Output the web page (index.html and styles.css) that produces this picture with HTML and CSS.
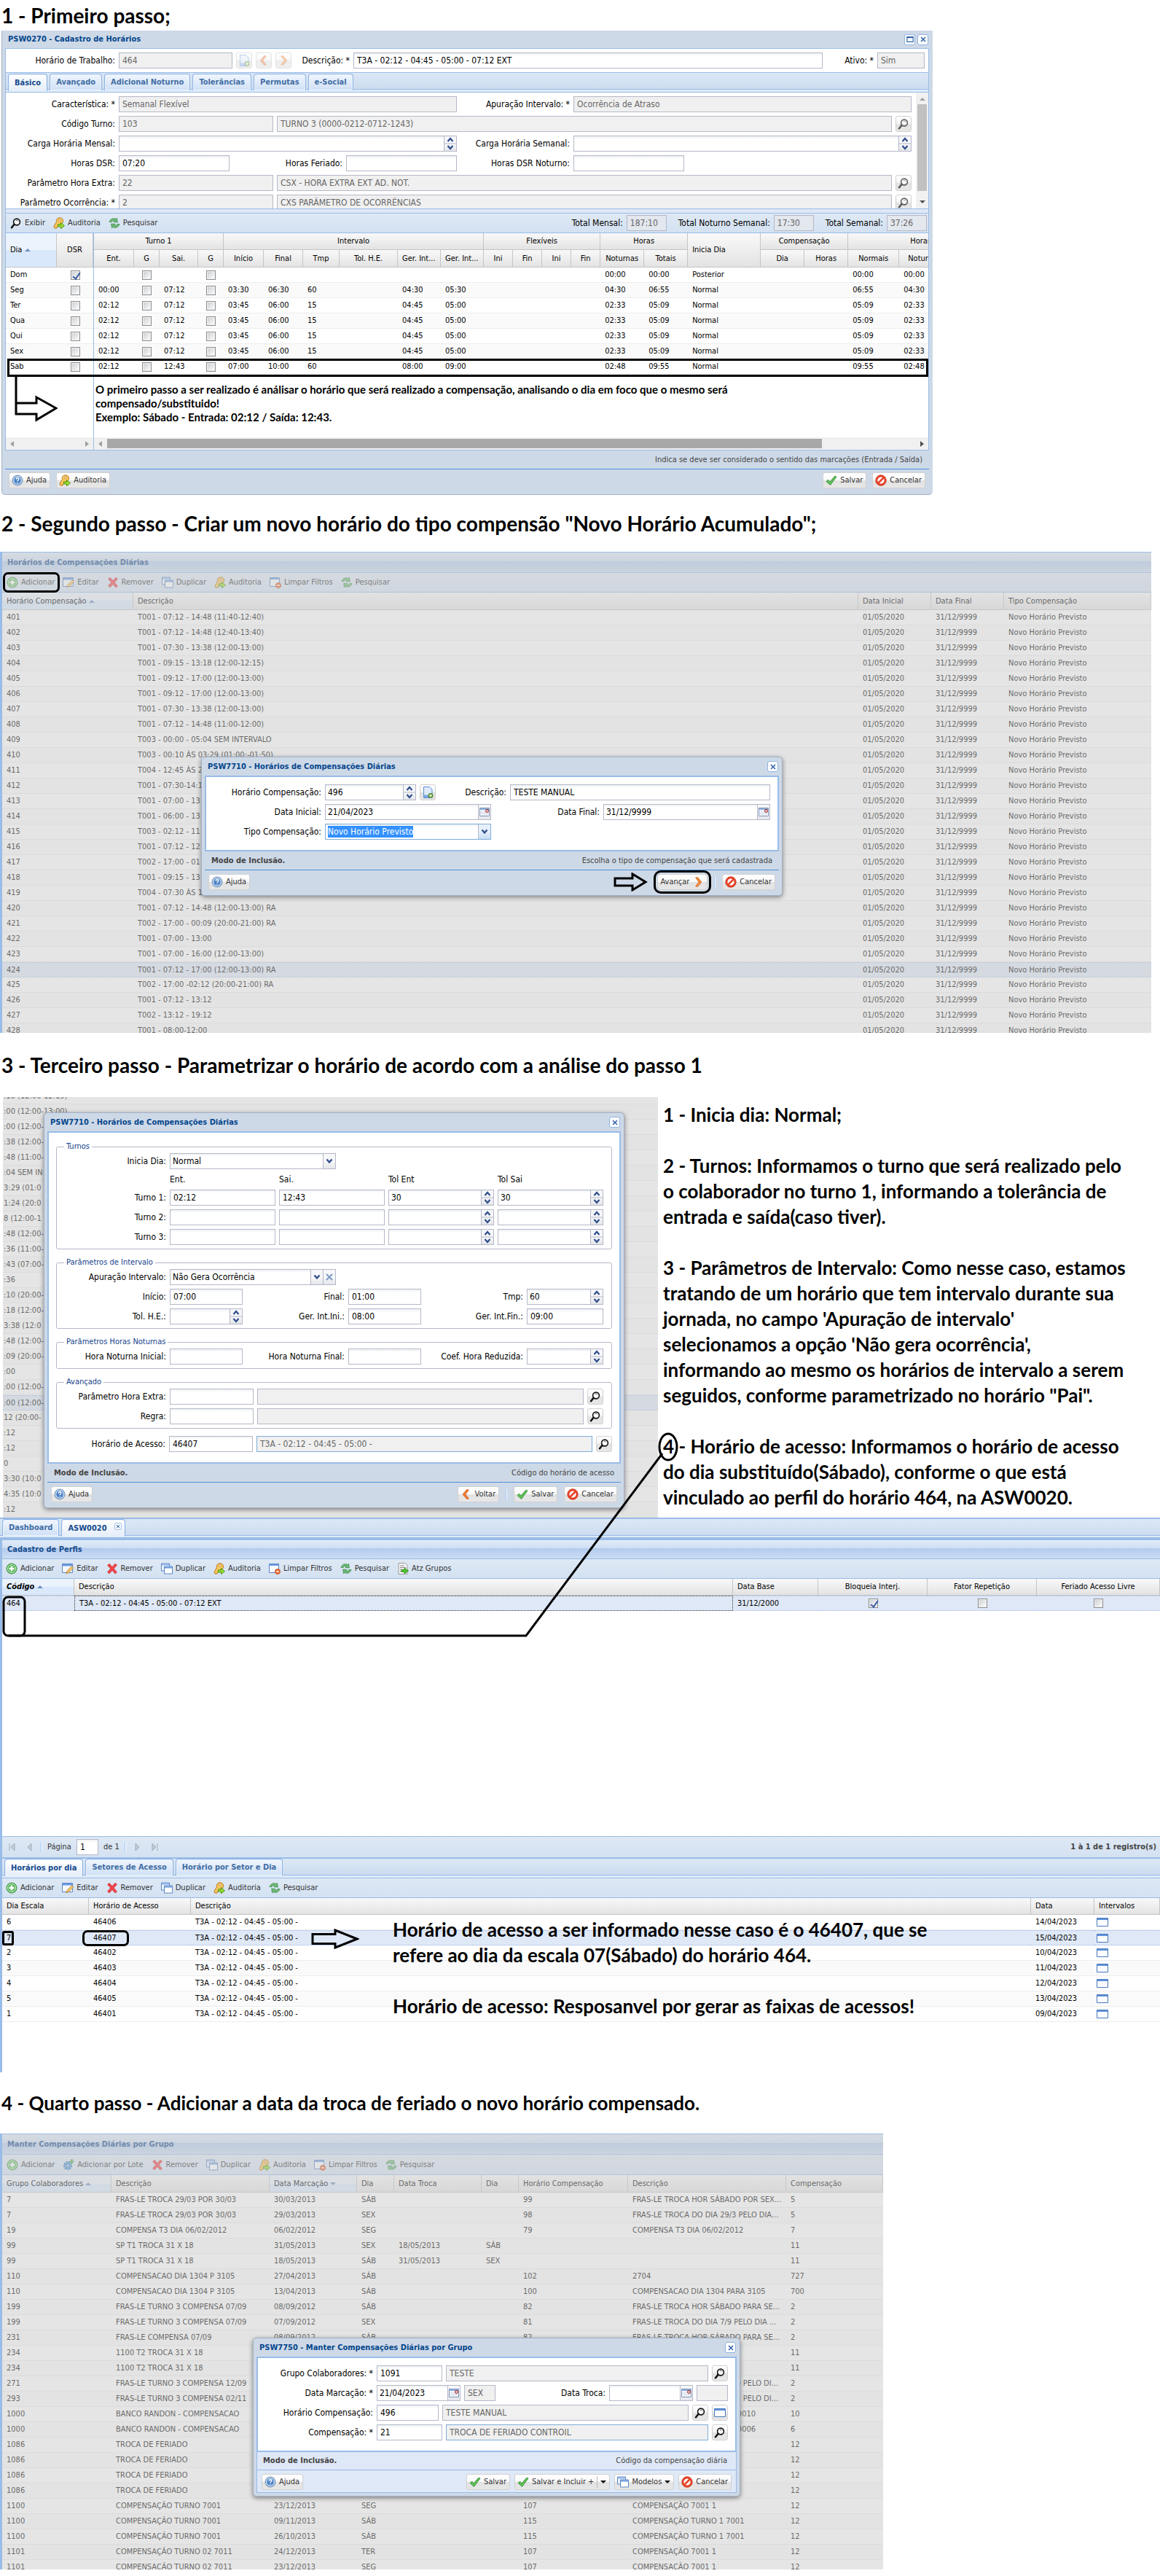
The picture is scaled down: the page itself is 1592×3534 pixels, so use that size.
FILE: index.html
```html
<!DOCTYPE html>
<html lang="pt-BR">
<head>
<meta charset="utf-8">
<meta name="viewport" content="width=device-width, initial-scale=1">
<title>Troca de feriado - passo a passo</title>
<link rel="stylesheet" href="styles.css">
</head>
<body>
<svg class="sprite" aria-hidden="true">
  <symbol id="lens" viewBox="0 0 16 16"><circle cx="9" cy="6.5" r="4.4" fill="#fff" fill-opacity=".7" stroke="#111" stroke-width="1.6"/><path d="M8 4.5q2-1 3 1" fill="none" stroke="#555"/><path d="M5.6 9.8 2 14.2" stroke="#111" stroke-width="2.6" stroke-linecap="round"/></symbol>
  <symbol id="key" viewBox="0 0 16 16"><path d="M8.500 .8a4.200 4.200 0 0 0-4 5.600L1 12.500 2 15h3l2-4 3-1.500a4.300 4.300 0 0 0-1.500-8.700z" fill="#f6c65b" stroke="#b9781f"/><circle cx="9" cy="4" r="1.400" fill="#fff" stroke="#b9781f" stroke-width=".7"/><path d="M6.500 10h4V7.500l5 4.200-5 4V13h-4z" fill="#9be02c" stroke="#3d8a12" stroke-width=".9"/></symbol>
  <symbol id="refresh" viewBox="0 0 16 16"><path d="M1 6.500C2 2.500 6.500.500 10 2.500l1.500-1.200.8 5.700-5.500-.5 1.500-1.400C6.500 4 4.700 4.800 4.200 6.500z" fill="#6dbb74" stroke="#3f8a4a" stroke-width=".8"/><path d="M15 9.500c-1 4-5.500 6-9 4l-1.500 1.200L3.700 9l5.500.5-1.500 1.400c1.800 1.100 3.600.3 4.100-1.400z" fill="#6dbb74" stroke="#3f8a4a" stroke-width=".8"/></symbol>
  <symbol id="check" viewBox="0 0 16 16"><path d="M1 9.500 3.500 7l2.300 3L13 2l2 1.200L6.500 14.500z" fill="#5fbf55" stroke="#2f8a36" stroke-width=".8"/></symbol>
  <symbol id="cancel" viewBox="0 0 16 16"><circle cx="8" cy="8" r="6" fill="#fff" stroke="#e8442a" stroke-width="2.800"/><path d="m4 12 8-8" stroke="#e8442a" stroke-width="2.500"/><circle cx="8" cy="8" r="7.300" fill="none" stroke="#b8311c" stroke-width=".5"/></symbol>
  <symbol id="help" viewBox="0 0 16 16"><circle cx="8" cy="8" r="7" fill="#9dbde0" stroke="#7593bb"/><circle cx="8" cy="8" r="5.200" fill="#4b83c6" stroke="#e9f1fa" stroke-width=".8"/><path d="M6.200 6.600q.2-1.800 1.900-1.800 1.700.1 1.700 1.500 0 .9-1 1.500-.7.500-.7 1.200M8 10.300v1.300" fill="none" stroke="#fff" stroke-width="1.400"/></symbol>
  <symbol id="add" viewBox="0 0 16 16"><circle cx="8" cy="8" r="7" fill="#5cb85c" stroke="#3f9142"/><circle cx="8" cy="8" r="5.600" fill="none" stroke="#c9eac9"/><path d="M8 4.500v7M4.500 8h7" stroke="#fff" stroke-width="2.400"/></symbol>
  <symbol id="edit" viewBox="0 0 16 16"><path d="M.5 1.500h14v12H.5z" fill="#f5f8fd" stroke="#5d86c5"/><path d="M1 2h13v2.500H1z" fill="#6b9be0"/><path d="m6 14.800 1-3.500 6.500-6.500 2.200 2.200-6.500 6.600z" fill="#f7c96b" stroke="#b0752a" stroke-width=".8"/></symbol>
  <symbol id="remove" viewBox="0 0 16 16"><path d="M1.500 3.500 4 1.200 8 5.500l4-4.300 2.500 2L10.300 8l4.200 5-2.500 2L8 10.500 4 15l-2.500-2.300L5.700 8z" fill="#f0454a" stroke="#c4272e" stroke-width=".6"/></symbol>
  <symbol id="copy" viewBox="0 0 16 16"><path d="M.5 1h11v10H.5z" fill="#eef4fc" stroke="#5d86c5"/><path d="M1 1.500h10v2H1z" fill="#8fb4ea"/><path d="M4.500 5h11v10h-11z" fill="#fff" stroke="#5d86c5"/><path d="M5 5.500h10v2H5z" fill="#6b9be0"/></symbol>
  <symbol id="clear" viewBox="0 0 16 16"><path d="M.5 1.500h13v12H.5z" fill="#f7fafe" stroke="#5d86c5"/><path d="M1 2h12v2H1z" fill="#6b9be0"/><circle cx="12" cy="12" r="3.600" fill="#ea6a35" stroke="#b9481b" stroke-width=".7"/><path d="M10 12h4" stroke="#fff" stroke-width="1.300"/></symbol>
  <symbol id="groups" viewBox="0 0 16 16"><path d="M2 .5h9l3 3v12H2z" fill="#f4f4f4" stroke="#9a9a9a"/><path d="M4 4h6M4 6.500h8M4 9h3M4 11.500h2" stroke="#8a8a8a"/><path d="M6 9.500h4V7l5.500 4-5.500 4v-2.500H6z" fill="#4cc62c" stroke="#2c8415" stroke-width=".8"/></symbol>
  <symbol id="gear" viewBox="0 0 16 16"><circle cx="7" cy="9" r="5" fill="#62a8dc" stroke="#2f77b8" stroke-width="2.200" stroke-dasharray="2 1.400"/><circle cx="7" cy="9" r="2" fill="#d7e9f7" stroke="#2f77b8"/><path d="M12.500 0v7M9.500 3.500h6" stroke="#4da64d" stroke-width="2.200"/></symbol>
  <symbol id="doc" viewBox="0 0 16 16"><path d="M2.500.5h8l3.500 3.500v11.500H2.500z" fill="#dfeafc" stroke="#5b8dd6"/><path d="M3 11.500h8v3.500H3z" fill="#7ea9e6"/><circle cx="12" cy="12.500" r="3.200" fill="#6aa53d" stroke="#3f7420" stroke-width=".6"/><path d="M12 10.800v3.400M10.300 12.500h3.400" stroke="#fff" stroke-width="1.200"/></symbol>
  <symbol id="next" viewBox="0 0 16 16"><path d="m4.500 2 3-.5L13 8l-5.500 6.500-3-.5L9 8z" fill="#f08a3c" stroke="#c9641c" stroke-width=".6"/></symbol>
  <symbol id="prev" viewBox="0 0 16 16"><path d="m11.500 2-3-.5L3 8l5.500 6.500 3-.5L7 8z" fill="#ef7a35" stroke="#c9541c" stroke-width=".6"/></symbol>
  <symbol id="win" viewBox="0 0 16 16"><path d="M.5 2.500h15v11H.5z" fill="#fafcff" stroke="#4a78bd"/><path d="M1 3h14v2H1z" fill="#5f93dc"/></symbol>
  <symbol id="cal" viewBox="0 0 16 16"><path d="M1.500 2.500h13v11h-13z" fill="#fff" stroke="#7f95b8"/><path d="M2 3h12v2H2z" fill="#8fb0dd"/><path d="M2 8h12M2 10.500h12M5 5v8M8 5v8M11 5v8" stroke="#d5dcea"/><circle cx="11.500" cy="6.500" r="1.800" fill="#fff" stroke="#a2282c" stroke-width="1.200"/></symbol>
  <symbol id="ud" viewBox="0 0 16 20"><path d="m4.500 7 3.500-4 3.500 4M4.500 13l3.500 4 3.500-4" fill="none" stroke="#2f4e8c" stroke-width="2.200"/><path d="M0 10h16" stroke="#b5b8c8"/></symbol>
  <symbol id="down" viewBox="0 0 16 20"><path d="m4.500 7.500 3.500 4 3.500-4" fill="none" stroke="#2f4e8c" stroke-width="2.400"/></symbol>
  <symbol id="x" viewBox="0 0 16 16"><path d="m4 4 8 8m0-8-8 8" stroke="#2f5fa8" stroke-width="2"/></symbol>
  <symbol id="max" viewBox="0 0 16 16"><path d="M2.500 3.500h11v9h-11z" fill="none" stroke="#2f5fa8" stroke-width="1.500"/><path d="M2 4.500h12" stroke="#2f5fa8" stroke-width="2"/></symbol>
</svg>

<main>
<section class="step step--1">
  <h2 class="step-title">1 - Primeiro passo;</h2>
  <div class="win win--main">
    <header class="win-title"><h3>PSW0270 - Cadastro de Horários</h3><button class="tool" aria-label="Maximizar"><svg><use href="#max"/></svg></button><button class="tool" aria-label="Fechar"><svg><use href="#x"/></svg></button></header>
    <div class="frame">
      <div class="row row--head">
        <label class="lbl w150" for="ht">Horário de Trabalho:</label><input id="ht" class="w156" value="464" disabled>
        <button class="sq" disabled aria-label="Novo"><svg><use href="#doc"/></svg></button><button class="sq" disabled aria-label="Anterior"><svg><use href="#prev"/></svg></button><button class="sq" disabled aria-label="Próximo"><svg><use href="#next"/></svg></button>
        <label class="lbl w75" for="ds">Descrição: *</label><input id="ds" class="grow" value="T3A - 02:12 - 04:45 - 05:00 - 07:12 EXT">
        <label class="lbl w65" for="at">Ativo: *</label><input id="at" class="w65" value="Sim" disabled>
      </div>
      <nav class="tabs"><button class="tab on">Básico</button><button class="tab">Avançado</button><button class="tab">Adicional Noturno</button><button class="tab">Tolerâncias</button><button class="tab">Permutas</button><button class="tab">e-Social</button></nav>
      <div class="scroll-form">
        <div class="rows">
          <div class="halves">
            <div class="row"><label class="lbl w150" for="ca">Característica: *</label><input id="ca" class="grow" value="Semanal Flexível" disabled></div>
            <div class="row"><label class="lbl w150" for="ai">Apuração Intervalo: *</label><input id="ai" class="grow" value="Ocorrência de Atraso" disabled></div>
          </div>
          <div class="row"><label class="lbl w150" for="ct">Código Turno:</label><input id="ct" class="w212" value="103" disabled><input class="grow" aria-label="Descrição do turno" value="TURNO 3 (0000-0212-0712-1243)" disabled><button class="sq" disabled aria-label="Buscar turno"><svg><use href="#lens"/></svg></button></div>
          <div class="halves">
            <div class="row"><label class="lbl w150" for="cm">Carga Horária Mensal:</label><span class="combo grow"><input id="cm"><button aria-label="Ajustar"><svg><use href="#ud"/></svg></button></span></div>
            <div class="row"><label class="lbl w150" for="cs">Carga Horária Semanal:</label><span class="combo grow"><input id="cs"><button aria-label="Ajustar"><svg><use href="#ud"/></svg></button></span></div>
          </div>
          <div class="row"><label class="lbl w150" for="hd">Horas DSR:</label><input id="hd" class="w152" value="07:20"><label class="lbl w150" for="hf">Horas Feriado:</label><input id="hf" class="w152"><label class="lbl w150" for="hn">Horas DSR Noturno:</label><input id="hn" class="w152"></div>
          <div class="row"><label class="lbl w150" for="ph">Parâmetro Hora Extra:</label><input id="ph" class="w212" value="22" disabled><input class="grow" aria-label="Descrição hora extra" value="CSX - HORA EXTRA EXT AD. NOT." disabled><button class="sq" disabled aria-label="Buscar hora extra"><svg><use href="#lens"/></svg></button></div>
          <div class="row"><label class="lbl w150" for="po">Parâmetro Ocorrência: *</label><input id="po" class="w212" value="2" disabled><input class="grow" aria-label="Descrição ocorrência" value="CXS PARÂMETRO DE OCORRÊNCIAS" disabled><button class="sq" disabled aria-label="Buscar ocorrência"><svg><use href="#lens"/></svg></button></div>
        </div>
        <div class="vbar"><i class="tri up"></i><span></span><i class="tri dn"></i></div>
      </div>
      <div class="splitter"></div>
      <div class="toolbar">
        <button class="tb"><svg><use href="#lens"/></svg>Exibir</button><button class="tb"><svg><use href="#key"/></svg>Auditoria</button><button class="tb"><svg><use href="#refresh"/></svg>Pesquisar</button>
        <span class="totals"><label for="t1">Total Mensal:</label><input id="t1" value="187:10" disabled><label for="t2">Total Noturno Semanal:</label><input id="t2" value="17:30" disabled><label for="t3">Total Semanal:</label><input id="t3" value="37:26" disabled></span>
      </div>
      <div class="split">
        <div class="locked">
          <table class="grid">
            <colgroup><col class="c70"><col class="c50"></colgroup>
            <thead><tr class="tall"><th class="sorted">Dia <i class="tri up"></i></th><th class="c">DSR</th></tr></thead>
            <tbody>
            <tr><td>Dom<td><input type="checkbox" aria-label="DSR" checked>
            <tr><td>Seg<td><input type="checkbox" aria-label="DSR">
            <tr><td>Ter<td><input type="checkbox" aria-label="DSR">
            <tr><td>Qua<td><input type="checkbox" aria-label="DSR">
            <tr><td>Qui<td><input type="checkbox" aria-label="DSR">
            <tr><td>Sex<td><input type="checkbox" aria-label="DSR">
            <tr><td>Sab<td><input type="checkbox" aria-label="DSR">
            </tbody>
          </table>
          <div class="hbar"><i class="tri lf"></i><b></b><i class="tri rt"></i></div>
        </div>
        <div class="free">
          <table class="grid grid--days">
            <colgroup><col class="c55"><col class="c35"><col class="c53"><col class="c35"><col class="c55"><col class="c54"><col class="c50"><col class="c80"><col class="c59"><col class="c59"><col class="c40"><col class="c40"><col class="c40"><col class="c40"><col class="c60"><col class="c60"><col class="c100"><col class="c60"><col class="c60"><col class="c70"><col class="c70"><col class="c60"></colgroup>
            <thead>
            <tr><th class="c" colspan="4">Turno 1</th><th class="c" colspan="6">Intervalo</th><th class="c" colspan="4">Flexíveis</th><th class="c" colspan="2">Horas</th><th rowspan="2">Inicia Dia</th><th class="c" colspan="2">Compensação</th><th class="c" colspan="3">Horas</th></tr>
            <tr><th class="c">Ent.</th><th class="c">G</th><th class="c">Sai.</th><th class="c">G</th><th class="c">Início</th><th class="c">Final</th><th class="c">Tmp</th><th class="c">Tol. H.E.</th><th>Ger. Int...</th><th>Ger. Int...</th><th class="c">Ini</th><th class="c">Fin</th><th class="c">Ini</th><th class="c">Fin</th><th class="c">Noturnas</th><th class="c">Totais</th><th class="c">Dia</th><th class="c">Horas</th><th class="c">Normais</th><th class="c">Noturnas</th><th></th></tr>
            </thead>
            <tbody>
            <tr><td><td><input type="checkbox" aria-label="G"><td><td><input type="checkbox" aria-label="G"><td><td><td><td><td><td><td><td><td><td><td>00:00<td>00:00<td>Posterior<td><td><td>00:00<td>00:00<td>
            <tr><td>00:00<td><input type="checkbox" aria-label="G"><td>07:12<td><input type="checkbox" aria-label="G"><td>03:30<td>06:30<td>60<td><td>04:30<td>05:30<td><td><td><td><td>04:30<td>06:55<td>Normal<td><td><td>06:55<td>04:30<td>
            <tr><td>02:12<td><input type="checkbox" aria-label="G"><td>07:12<td><input type="checkbox" aria-label="G"><td>03:45<td>06:00<td>15<td><td>04:45<td>05:00<td><td><td><td><td>02:33<td>05:09<td>Normal<td><td><td>05:09<td>02:33<td>
            <tr><td>02:12<td><input type="checkbox" aria-label="G"><td>07:12<td><input type="checkbox" aria-label="G"><td>03:45<td>06:00<td>15<td><td>04:45<td>05:00<td><td><td><td><td>02:33<td>05:09<td>Normal<td><td><td>05:09<td>02:33<td>
            <tr><td>02:12<td><input type="checkbox" aria-label="G"><td>07:12<td><input type="checkbox" aria-label="G"><td>03:45<td>06:00<td>15<td><td>04:45<td>05:00<td><td><td><td><td>02:33<td>05:09<td>Normal<td><td><td>05:09<td>02:33<td>
            <tr><td>02:12<td><input type="checkbox" aria-label="G"><td>07:12<td><input type="checkbox" aria-label="G"><td>03:45<td>06:00<td>15<td><td>04:45<td>05:00<td><td><td><td><td>02:33<td>05:09<td>Normal<td><td><td>05:09<td>02:33<td>
            <tr><td>02:12<td><input type="checkbox" aria-label="G"><td>12:43<td><input type="checkbox" aria-label="G"><td>07:00<td>10:00<td>60<td><td>08:00<td>09:00<td><td><td><td><td>02:48<td>09:55<td>Normal<td><td><td>09:55<td>02:48<td>
            </tbody>
          </table>
          <p class="note">O primeiro passo a ser realizado é análisar o horário que será realizado a compensação, analisando o dia em foco que o mesmo será<br>compensado/substituido!<br>Exemplo: Sábado - Entrada: 02:12 / Saída: 12:43.</p>
          <div class="hbar"><i class="tri lf"></i><span></span><i class="tri rt dark"></i></div>
        </div>
        <div class="mark mark--sab"></div>
        <svg class="elbow" viewBox="0 0 62 66"><path d="M5 0v52h28v8l27-16-27-15v8H5" fill="none" stroke="#000" stroke-width="3"/></svg>
      </div>
    </div>
    <div class="status"><span></span><span>Indica se deve ser considerado o sentido das marcações (Entrada / Saída)</span></div>
    <footer class="foot"><button class="btn"><svg><use href="#help"/></svg>Ajuda</button><button class="btn"><svg><use href="#key"/></svg>Auditoria</button><i class="fill"></i><button class="btn"><svg><use href="#check"/></svg>Salvar</button><button class="btn"><svg><use href="#cancel"/></svg>Cancelar</button></footer>
  </div>
</section>

<section class="step step--2">
  <h2 class="step-title">2 - Segundo passo - Criar um novo horário do tipo compensão "Novo Horário Acumulado";</h2>
  <div class="stage stage--2">
    <div class="panel masked">
      <h3 class="panel-title">Horários de Compensações Diárias</h3>
      <div class="toolbar"><button class="tb"><svg><use href="#add"/></svg>Adicionar</button><button class="tb"><svg><use href="#edit"/></svg>Editar</button><button class="tb"><svg><use href="#remove"/></svg>Remover</button><button class="tb"><svg><use href="#copy"/></svg>Duplicar</button><button class="tb"><svg><use href="#key"/></svg>Auditoria</button><button class="tb"><svg><use href="#clear"/></svg>Limpar Filtros</button><button class="tb"><svg><use href="#refresh"/></svg>Pesquisar</button></div>
      <table class="grid grid--cut">
        <colgroup><col class="c180"><col><col class="c100"><col class="c100"><col class="c202"></colgroup>
        <thead><tr><th class="sorted">Horário Compensação <i class="tri up"></i></th><th>Descrição</th><th>Data Inicial</th><th>Data Final</th><th>Tipo Compensação</th></tr></thead>
        <tbody>
        <tr><td>401<td>T001 - 07:12 - 14:48 (11:40-12:40)<td>01/05/2020<td>31/12/9999<td>Novo Horário Previsto
        <tr><td>402<td>T001 - 07:12 - 14:48 (12:40-13:40)<td>01/05/2020<td>31/12/9999<td>Novo Horário Previsto
        <tr><td>403<td>T001 - 07:30 - 13:38 (12:00-13:00)<td>01/05/2020<td>31/12/9999<td>Novo Horário Previsto
        <tr><td>404<td>T001 - 09:15 - 13:18 (12:00-12:15)<td>01/05/2020<td>31/12/9999<td>Novo Horário Previsto
        <tr><td>405<td>T001 - 09:12 - 17:00 (12:00-13:00)<td>01/05/2020<td>31/12/9999<td>Novo Horário Previsto
        <tr><td>406<td>T001 - 09:12 - 17:00 (12:00-13:00)<td>01/05/2020<td>31/12/9999<td>Novo Horário Previsto
        <tr><td>407<td>T001 - 07:30 - 13:38 (12:00-13:00)<td>01/05/2020<td>31/12/9999<td>Novo Horário Previsto
        <tr><td>408<td>T001 - 07:12 - 14:48 (11:00-12:00)<td>01/05/2020<td>31/12/9999<td>Novo Horário Previsto
        <tr><td>409<td>T003 - 00:00 - 05:04 SEM INTERVALO<td>01/05/2020<td>31/12/9999<td>Novo Horário Previsto
        <tr><td>410<td>T003 - 00:10 ÀS 03:29 (01:00:-01:50)<td>01/05/2020<td>31/12/9999<td>Novo Horário Previsto
        <tr><td>411<td>T004 - 12:45 ÀS 2<td>01/05/2020<td>31/12/9999<td>Novo Horário Previsto
        <tr><td>412<td>T001 - 07:30-14:1<td>01/05/2020<td>31/12/9999<td>Novo Horário Previsto
        <tr><td>413<td>T001 - 07:00 - 13<td>01/05/2020<td>31/12/9999<td>Novo Horário Previsto
        <tr><td>414<td>T001 - 06:00 - 13<td>01/05/2020<td>31/12/9999<td>Novo Horário Previsto
        <tr><td>415<td>T003 - 02:12 - 11<td>01/05/2020<td>31/12/9999<td>Novo Horário Previsto
        <tr><td>416<td>T001 - 07:12 - 12<td>01/05/2020<td>31/12/9999<td>Novo Horário Previsto
        <tr><td>417<td>T002 - 17:00 - 01<td>01/05/2020<td>31/12/9999<td>Novo Horário Previsto
        <tr><td>418<td>T001 - 09:15 - 13<td>01/05/2020<td>31/12/9999<td>Novo Horário Previsto
        <tr><td>419<td>T004 - 07:30 ÀS 13:38 (12:00-13:00)<td>01/05/2020<td>31/12/9999<td>Novo Horário Previsto
        <tr><td>420<td>T001 - 07:12 - 14:48 (12:00-13:00) RA<td>01/05/2020<td>31/12/9999<td>Novo Horário Previsto
        <tr><td>421<td>T002 - 17:00 - 00:09 (20:00-21:00) RA<td>01/05/2020<td>31/12/9999<td>Novo Horário Previsto
        <tr><td>422<td>T001 - 07:00 - 13:00<td>01/05/2020<td>31/12/9999<td>Novo Horário Previsto
        <tr><td>423<td>T001 - 07:00 - 16:00 (12:00-13:00)<td>01/05/2020<td>31/12/9999<td>Novo Horário Previsto
        <tr class="sel"><td>424<td>T001 - 07:12 - 17:00 (12:00-13:00) RA<td>01/05/2020<td>31/12/9999<td>Novo Horário Previsto
        <tr><td>425<td>T002 - 17:00 -02:12 (20:00-21:00) RA<td>01/05/2020<td>31/12/9999<td>Novo Horário Previsto
        <tr><td>426<td>T001 - 07:12 - 13:12<td>01/05/2020<td>31/12/9999<td>Novo Horário Previsto
        <tr><td>427<td>T002 - 13:12 - 19:12<td>01/05/2020<td>31/12/9999<td>Novo Horário Previsto
        <tr><td>428<td>T001 - 08:00-12:00<td>01/05/2020<td>31/12/9999<td>Novo Horário Previsto
        </tbody>
      </table>
    </div>
    <div class="mark mark--add"></div>
    <div class="win dialog dialog--2" role="dialog" aria-label="Horários de Compensações Diárias">
      <header class="win-title"><h3>PSW7710 - Horários de Compensações Diárias</h3><button class="tool" aria-label="Fechar"><svg><use href="#x"/></svg></button></header>
      <div class="body rows">
        <div class="row"><label class="lbl w154" for="a1">Horário Compensação:</label><span class="combo w125"><input id="a1" value="496"><button aria-label="Ajustar"><svg><use href="#ud"/></svg></button></span><button class="sq" aria-label="Novo"><svg><use href="#doc"/></svg></button><label class="lbl w92" for="a2">Descrição:</label><input id="a2" class="grow" value="TESTE MANUAL"></div>
        <div class="row"><label class="lbl w154" for="a3">Data Inicial:</label><span class="combo w228"><input id="a3" value="21/04/2023"><button aria-label="Calendário"><svg><use href="#cal"/></svg></button></span><label class="lbl w144" for="a4">Data Final:</label><span class="combo grow"><input id="a4" value="31/12/9999"><button aria-label="Calendário"><svg><use href="#cal"/></svg></button></span></div>
        <div class="row"><label class="lbl w154" for="a5">Tipo Compensação:</label><span class="combo w228 focus"><span class="picked">Novo Horário Previsto</span><select id="a5"><option></option></select><button aria-label="Abrir lista"><svg><use href="#down"/></svg></button></span></div>
      </div>
      <div class="status"><b>Modo de Inclusão.</b><span>Escolha o tipo de compensação que será cadastrada</span></div>
      <footer class="foot"><button class="btn"><svg><use href="#help"/></svg>Ajuda</button><i class="fill"></i><button class="btn ringed">Avançar<svg><use href="#next"/></svg></button><i class="sep"></i><button class="btn"><svg><use href="#cancel"/></svg>Cancelar</button></footer>
      <svg class="arrow arrow--next" viewBox="0 0 48 26"><path d="M2 8h24V2l18 11-18 11v-6H2z" fill="none" stroke="#000" stroke-width="3"/></svg>
    </div>
  </div>
</section>

<section class="step step--3">
  <h2 class="step-title">3 - Terceiro passo - Parametrizar o horário de acordo com a análise do passo 1</h2>
  <div class="linked">
    <div class="duo">
      <div class="stage stage--3">
        <ul class="tails masked">
          <li>:18 (12:00-12:15)<li>:00 (12:00-13:00)<li>:00 (12:00-<li>:38 (12:00-<li>:48 (11:00-<li>:04 SEM IN<li>3:29 (01:0<li>1:24 (20:0<li>8 (12:00-1<li>:48 (12:00-<li>:36 (11:00-<li>:43 (07:00-<li>:36<li>:10 (20:00-<li>:18 (12:00-<li>3:38 (12:0<li>:48 (12:00-<li>:09 (20:00-<li>:00<li>:00 (12:00-<li class="sel">:00 (12:00-<li>12 (20:00-<li>:12<li>:12<li>0<li>3:30 (10:0<li>4:35 (10:0<li>:12
        </ul>
        <div class="win dialog dialog--3" role="dialog" aria-label="Parâmetros do horário">
          <header class="win-title"><h3>PSW7710 - Horários de Compensações Diárias</h3><button class="tool" aria-label="Fechar"><svg><use href="#x"/></svg></button></header>
          <div class="body">
            <fieldset><legend>Turnos</legend>
              <div class="row"><label class="lbl w145" for="b1">Inicia Dia:</label><span class="combo w228"><select id="b1"><option>Normal</option></select><button aria-label="Abrir lista"><svg><use href="#down"/></svg></button></span></div>
              <div class="row heads"><span class="w145"></span><span class="w145">Ent.</span><span class="w145">Sai.</span><span class="w145">Tol Ent</span><span class="w145">Tol Sai</span></div>
              <div class="row"><label class="lbl w145" for="b2">Turno 1:</label><input id="b2" class="w145" value="02:12"><input class="w145" aria-label="Saída 1" value="12:43"><span class="combo w145"><input aria-label="Tol Ent 1" value="30"><button aria-label="Ajustar"><svg><use href="#ud"/></svg></button></span><span class="combo w145"><input aria-label="Tol Sai 1" value="30"><button aria-label="Ajustar"><svg><use href="#ud"/></svg></button></span></div>
              <div class="row"><label class="lbl w145" for="b3">Turno 2:</label><input id="b3" class="w145"><input class="w145" aria-label="Saída 2"><span class="combo w145"><input aria-label="Tol Ent 2"><button aria-label="Ajustar"><svg><use href="#ud"/></svg></button></span><span class="combo w145"><input aria-label="Tol Sai 2"><button aria-label="Ajustar"><svg><use href="#ud"/></svg></button></span></div>
              <div class="row"><label class="lbl w145" for="b4">Turno 3:</label><input id="b4" class="w145"><input class="w145" aria-label="Saída 3"><span class="combo w145"><input aria-label="Tol Ent 3"><button aria-label="Ajustar"><svg><use href="#ud"/></svg></button></span><span class="combo w145"><input aria-label="Tol Sai 3"><button aria-label="Ajustar"><svg><use href="#ud"/></svg></button></span></div>
            </fieldset>
            <fieldset><legend>Parâmetros de Intervalo</legend>
              <div class="row"><label class="lbl w145" for="c1">Apuração Intervalo:</label><span class="combo w228"><select id="c1"><option>Não Gera Ocorrência</option></select><button aria-label="Abrir lista"><svg><use href="#down"/></svg></button><button aria-label="Limpar"><svg class="dim"><use href="#x"/></svg></button></span></div>
              <div class="row"><label class="lbl w145" for="c2">Início:</label><input id="c2" class="w100" value="07:00"><label class="lbl w135" for="c3">Final:</label><input id="c3" class="w100" value="01:00"><label class="lbl w135" for="c4">Tmp:</label><span class="combo grow"><input id="c4" value="60"><button aria-label="Ajustar"><svg><use href="#ud"/></svg></button></span></div>
              <div class="row"><label class="lbl w145" for="c5">Tol. H.E.:</label><span class="combo w100"><input id="c5"><button aria-label="Ajustar"><svg><use href="#ud"/></svg></button></span><label class="lbl w135" for="c6">Ger. Int.Ini.:</label><input id="c6" class="w100" value="08:00"><label class="lbl w135" for="c7">Ger. Int.Fin.:</label><input id="c7" class="grow" value="09:00"></div>
            </fieldset>
            <fieldset><legend>Parâmetros Horas Noturnas</legend>
              <div class="row"><label class="lbl w145" for="d1">Hora Noturna Inicial:</label><input id="d1" class="w100"><label class="lbl w135" for="d2">Hora Noturna Final:</label><input id="d2" class="w100"><label class="lbl w135" for="d3">Coef. Hora Reduzida:</label><span class="combo grow"><input id="d3"><button aria-label="Ajustar"><svg><use href="#ud"/></svg></button></span></div>
            </fieldset>
            <fieldset><legend>Avançado</legend>
              <div class="row"><label class="lbl w145" for="e1">Parâmetro Hora Extra:</label><input id="e1" class="w115"><input class="grow" aria-label="Descrição hora extra" disabled><button class="sq" aria-label="Buscar"><svg><use href="#lens"/></svg></button></div>
              <div class="row"><label class="lbl w145" for="e2">Regra:</label><input id="e2" class="w115"><input class="grow" aria-label="Descrição regra" disabled><button class="sq" aria-label="Buscar"><svg><use href="#lens"/></svg></button></div>
            </fieldset>
            <div class="row row--access"><label class="lbl w150" for="e3">Horário de Acesso:</label><input id="e3" class="w115" value="46407"><input class="grow focus" aria-label="Descrição do acesso" value="T3A - 02:12 - 04:45 - 05:00 -" disabled><button class="sq" aria-label="Buscar"><svg><use href="#lens"/></svg></button></div>
          </div>
          <div class="status"><b>Modo de Inclusão.</b><span>Código do horário de acesso</span></div>
          <footer class="foot"><button class="btn"><svg><use href="#help"/></svg>Ajuda</button><i class="fill"></i><button class="btn"><svg><use href="#prev"/></svg>Voltar</button><i class="sep"></i><button class="btn"><svg><use href="#check"/></svg>Salvar</button><button class="btn"><svg><use href="#cancel"/></svg>Cancelar</button></footer>
        </div>
      </div>
      <div class="explain">
        <p>1 - Inicia dia: Normal;</p>
        <p>2 - Turnos: Informamos o turno que será realizado pelo<br>o colaborador no turno 1, informando a tolerância de<br>entrada e saída(caso tiver).</p>
        <p>3 - Parâmetros de Intervalo: Como nesse caso, estamos<br>tratando de um horário que tem intervalo durante sua<br>jornada, no campo 'Apuração de intervalo'<br>selecionamos a opção 'Não gera ocorrência',<br>informando ao mesmo os horários de intervalo a serem<br>seguidos, conforme parametrizado no horário "Pai".</p>
        <p>4 - Horário de acesso: Informamos o horário de acesso<br>do dia substituído(Sábado), conforme o que está<br>vinculado ao perfil do horário 464, na ASW0020.</p>
      </div>
    </div>

    <div class="app">
      <nav class="tabs"><button class="tab">Dashboard</button><button class="tab on">ASW0020 <svg><use href="#x"/></svg></button></nav>
      <div class="panel panel--live">
        <h3 class="panel-title">Cadastro de Perfis</h3>
        <div class="toolbar"><button class="tb"><svg><use href="#add"/></svg>Adicionar</button><button class="tb"><svg><use href="#edit"/></svg>Editar</button><button class="tb"><svg><use href="#remove"/></svg>Remover</button><button class="tb"><svg><use href="#copy"/></svg>Duplicar</button><button class="tb"><svg><use href="#key"/></svg>Auditoria</button><button class="tb"><svg><use href="#clear"/></svg>Limpar Filtros</button><button class="tb"><svg><use href="#refresh"/></svg>Pesquisar</button><button class="tb"><svg><use href="#groups"/></svg>Atz Grupos</button></div>
        <div class="room room--profiles">
          <table class="grid">
            <colgroup><col class="c99"><col><col class="c117"><col class="c150"><col class="c150"><col class="c169"></colgroup>
            <thead><tr><th class="sorted"><b><em>Código</em></b> <i class="tri up"></i></th><th>Descrição</th><th>Data Base</th><th class="c">Bloqueia Interj.</th><th class="c">Fator Repetição</th><th class="c">Feriado Acesso Livre</th></tr></thead>
            <tbody><tr class="sel"><td>464<td class="cur">T3A - 02:12 - 04:45 - 05:00 - 07:12 EXT<td>31/12/2000<td><input type="checkbox" aria-label="Bloqueia Interj." checked><td><input type="checkbox" aria-label="Fator Repetição"><td><input type="checkbox" aria-label="Feriado Acesso Livre"></tbody>
          </table>
        </div>
        <div class="pager"><button aria-label="Primeira"><svg viewBox="0 0 12 12"><path d="M2 1v10M9 1 4 6l5 5z" fill="#c3cbd6" stroke="#a3abb8"/></svg></button><button aria-label="Anterior"><svg viewBox="0 0 12 12"><path d="M8 1 3 6l5 5z" fill="#c3cbd6" stroke="#a3abb8"/></svg></button><i class="sep"></i><label for="pg">Página</label><input id="pg" value="1"><span>de 1</span><i class="sep"></i><button aria-label="Próxima"><svg viewBox="0 0 12 12"><path d="m4 1 5 5-5 5z" fill="#c3cbd6" stroke="#a3abb8"/></svg></button><button aria-label="Última"><svg viewBox="0 0 12 12"><path d="M10 1v10M3 1l5 5-5 5z" fill="#c3cbd6" stroke="#a3abb8"/></svg></button><b>1 à 1 de 1 registro(s)</b></div>
        <nav class="tabs tabs--low"><button class="tab on">Horários por dia</button><button class="tab">Setores de Acesso</button><button class="tab">Horário por Setor e Dia</button></nav>
        <div class="toolbar"><button class="tb"><svg><use href="#add"/></svg>Adicionar</button><button class="tb"><svg><use href="#edit"/></svg>Editar</button><button class="tb"><svg><use href="#remove"/></svg>Remover</button><button class="tb"><svg><use href="#copy"/></svg>Duplicar</button><button class="tb"><svg><use href="#key"/></svg>Auditoria</button><button class="tb"><svg><use href="#refresh"/></svg>Pesquisar</button></div>
        <div class="room room--days">
          <table class="grid">
            <colgroup><col class="c119"><col class="c140"><col><col class="c87"><col class="c90"></colgroup>
            <thead><tr><th>Dia Escala</th><th>Horário de Acesso</th><th>Descrição</th><th>Data</th><th>Intervalos</th></tr></thead>
            <tbody>
            <tr><td>6<td>46406<td>T3A - 02:12 - 04:45 - 05:00 -<td>14/04/2023<td class="ic"><svg><use href="#win"/></svg>
            <tr class="sel"><td>7<td>46407<td>T3A - 02:12 - 04:45 - 05:00 -<td>15/04/2023<td class="ic"><svg><use href="#win"/></svg>
            <tr><td>2<td>46402<td>T3A - 02:12 - 04:45 - 05:00 -<td>10/04/2023<td class="ic"><svg><use href="#win"/></svg>
            <tr><td>3<td>46403<td>T3A - 02:12 - 04:45 - 05:00 -<td>11/04/2023<td class="ic"><svg><use href="#win"/></svg>
            <tr><td>4<td>46404<td>T3A - 02:12 - 04:45 - 05:00 -<td>12/04/2023<td class="ic"><svg><use href="#win"/></svg>
            <tr><td>5<td>46405<td>T3A - 02:12 - 04:45 - 05:00 -<td>13/04/2023<td class="ic"><svg><use href="#win"/></svg>
            <tr><td>1<td>46401<td>T3A - 02:12 - 04:45 - 05:00 -<td>09/04/2023<td class="ic"><svg><use href="#win"/></svg>
            </tbody>
          </table>
          <div class="mark mark--seven"></div>
          <div class="mark mark--code"></div>
          <svg class="arrow arrow--row" viewBox="0 0 66 28"><path d="M2 7.500h31V2l30 12-30 12v-5.500H2z" fill="none" stroke="#000" stroke-width="3"/></svg>
          <p class="callout">Horário de acesso a ser informado nesse caso é o 46407, que se<br>refere ao dia da escala 07(Sábado) do horário 464.<br><br>Horário de acesso: Resposanvel por gerar as faixas de acessos!</p>
        </div>
      </div>
    </div>
    <svg class="link-line" viewBox="0 0 960 760"><g fill="none" stroke="#000" stroke-width="3"><ellipse cx="917" cy="480" rx="12" ry="18"/><path d="M909 489 722 739H12"/><rect x="5" y="686" width="29" height="53" rx="6"/></g></svg>
  </div>
</section>

<section class="step step--4">
  <h2 class="step-title">4 - Quarto passo - Adicionar a data da troca de feriado o novo horário compensado.</h2>
  <div class="stage stage--4">
    <div class="panel masked">
      <h3 class="panel-title">Manter Compensações Diárias por Grupo</h3>
      <div class="toolbar"><button class="tb"><svg><use href="#add"/></svg>Adicionar</button><button class="tb"><svg><use href="#gear"/></svg>Adicionar por Lote</button><button class="tb"><svg><use href="#remove"/></svg>Remover</button><button class="tb"><svg><use href="#copy"/></svg>Duplicar</button><button class="tb"><svg><use href="#key"/></svg>Auditoria</button><button class="tb"><svg><use href="#clear"/></svg>Limpar Filtros</button><button class="tb"><svg><use href="#refresh"/></svg>Pesquisar</button></div>
      <table class="grid grid--cut">
        <colgroup><col class="c150"><col class="c217"><col class="c120"><col class="c51"><col class="c120"><col class="c51"><col class="c150"><col class="c217"><col></colgroup>
        <thead><tr><th class="sorted">Grupo Colaboradores <i class="tri up"></i></th><th>Descrição</th><th class="sorted">Data Marcação <i class="tri dn"></i></th><th>Dia</th><th>Data Troca</th><th>Dia</th><th>Horário Compensação</th><th>Descrição</th><th>Compensação</th></tr></thead>
        <tbody>
        <tr><td>7<td>FRAS-LE TROCA 29/03 POR 30/03<td>30/03/2013<td>SÁB<td><td><td>99<td>FRAS-LE TROCA HOR SÁBADO POR SEX...<td>5
        <tr><td>7<td>FRAS-LE TROCA 29/03 POR 30/03<td>29/03/2013<td>SEX<td><td><td>98<td>FRAS-LE TROCA DO DIA 29/3 PELO DIA...<td>5
        <tr><td>19<td>COMPENSA T3 DIA 06/02/2012<td>06/02/2012<td>SEG<td><td><td>79<td>COMPENSA T3 DIA 06/02/2012<td>7
        <tr><td>99<td>SP T1 TROCA 31 X 18<td>31/05/2013<td>SEX<td>18/05/2013<td>SÁB<td><td><td>11
        <tr><td>99<td>SP T1 TROCA 31 X 18<td>18/05/2013<td>SÁB<td>31/05/2013<td>SEX<td><td><td>11
        <tr><td>110<td>COMPENSACAO DIA 1304 P 3105<td>27/04/2013<td>SÁB<td><td><td>102<td>2704<td>727
        <tr><td>110<td>COMPENSACAO DIA 1304 P 3105<td>13/04/2013<td>SÁB<td><td><td>100<td>COMPENSACAO DIA 1304 PARA 3105<td>700
        <tr><td>199<td>FRAS-LE TURNO 3 COMPENSA 07/09<td>08/09/2012<td>SÁB<td><td><td>82<td>FRAS-LE TROCA HOR SÁBADO PARA SE...<td>2
        <tr><td>199<td>FRAS-LE TURNO 3 COMPENSA 07/09<td>07/09/2012<td>SEX<td><td><td>81<td>FRAS-LE TROCA DO DIA 7/9 PELO DIA ...<td>2
        <tr><td>231<td>FRAS-LE COMPENSA 07/09<td>08/09/2012<td>SÁB<td><td><td>82<td>FRAS-LE TROCA HOR SÁBADO PARA SE...<td>2
        <tr><td>234<td>1100 T2 TROCA 31 X 18<td><td><td><td><td><td><td>11
        <tr><td>234<td>1100 T2 TROCA 31 X 18<td><td><td><td><td><td><td>11
        <tr><td>271<td>FRAS-LE TURNO 3 COMPENSA 12/09<td><td><td><td><td><td>FRAS-LE TROCA DO DIA 12/10 PELO DI...<td>2
        <tr><td>293<td>FRAS-LE TURNO 3 COMPENSA 02/11<td><td><td><td><td><td>FRAS-LE TROCA DO DIA 02/11 PELO DI...<td>2
        <tr><td>1000<td>BANCO RANDON - COMPENSACAO<td><td><td><td><td><td>COMPENSACAO RANDON CC 0010<td>10
        <tr><td>1000<td>BANCO RANDON - COMPENSACAO<td><td><td><td><td><td>COMPENSACAO RANDON CC 0006<td>6
        <tr><td>1086<td>TROCA DE FERIADO<td><td><td><td><td><td><td>12
        <tr><td>1086<td>TROCA DE FERIADO<td><td><td><td><td><td><td>12
        <tr><td>1086<td>TROCA DE FERIADO<td><td><td><td><td><td><td>12
        <tr><td>1086<td>TROCA DE FERIADO<td><td><td><td><td><td><td>12
        <tr><td>1100<td>COMPENSAÇÃO TURNO 7001<td>23/12/2013<td>SEG<td><td><td>107<td>COMPENSAÇÃO 7001 1<td>12
        <tr><td>1100<td>COMPENSAÇÃO TURNO 7001<td>09/11/2013<td>SÁB<td><td><td>115<td>COMPENSAÇÃO TURNO 1 7001<td>12
        <tr><td>1100<td>COMPENSAÇÃO TURNO 7001<td>26/10/2013<td>SÁB<td><td><td>115<td>COMPENSAÇÃO TURNO 1 7001<td>12
        <tr><td>1101<td>COMPENSAÇÃO TURNO 02 7011<td>24/12/2013<td>TER<td><td><td>107<td>COMPENSAÇÃO 7001 1<td>12
        <tr><td>1101<td>COMPENSAÇÃO TURNO 02 7011<td>23/12/2013<td>SEG<td><td><td>107<td>COMPENSAÇÃO 7001 1<td>12
        </tbody>
      </table>
    </div>
    <div class="win dialog dialog--4" role="dialog" aria-label="Manter Compensações Diárias por Grupo">
      <header class="win-title"><h3>PSW7750 - Manter Compensações Diárias por Grupo</h3><button class="tool" aria-label="Fechar"><svg><use href="#x"/></svg></button></header>
      <div class="body rows">
        <div class="row"><label class="lbl w154" for="g1">Grupo Colaboradores: *</label><input id="g1" class="w90" value="1091"><input class="grow" aria-label="Descrição do grupo" value="TESTE" disabled><button class="sq" aria-label="Buscar"><svg><use href="#lens"/></svg></button></div>
        <div class="row"><label class="lbl w154" for="g2">Data Marcação: *</label><span class="combo w115"><input id="g2" value="21/04/2023"><button aria-label="Calendário"><svg><use href="#cal"/></svg></button></span><input class="w43" aria-label="Dia da marcação" value="SEX" disabled><label class="lbl grow" for="g3">Data Troca:</label><span class="combo w115"><input id="g3"><button aria-label="Calendário"><svg><use href="#cal"/></svg></button></span><input class="w43" aria-label="Dia da troca" disabled></div>
        <div class="row"><label class="lbl w154" for="g4">Horário Compensação:</label><input id="g4" class="w85" value="496"><input class="grow" aria-label="Descrição do horário" value="TESTE MANUAL" disabled><button class="sq" aria-label="Buscar"><svg><use href="#lens"/></svg></button><button class="sq" aria-label="Abrir"><svg><use href="#win"/></svg></button></div>
        <div class="row"><label class="lbl w154" for="g5">Compensação: *</label><input id="g5" class="w90" value="21"><input class="grow focus" aria-label="Descrição da compensação" value="TROCA DE FERIADO CONTROIL" disabled><button class="sq" aria-label="Buscar"><svg><use href="#lens"/></svg></button></div>
      </div>
      <div class="status"><b>Modo de Inclusão.</b><span>Código da compensação diária</span></div>
      <footer class="foot"><button class="btn"><svg><use href="#help"/></svg>Ajuda</button><i class="fill"></i><button class="btn"><svg><use href="#check"/></svg>Salvar</button><button class="btn"><svg><use href="#check"/></svg>Salvar e Incluir +<i class="cut"></i><i class="tri dn dark"></i></button><button class="btn"><svg><use href="#copy"/></svg>Modelos<i class="tri dn dark"></i></button><button class="btn"><svg><use href="#cancel"/></svg>Cancelar</button></footer>
    </div>
  </div>
</section>
</main>
</body>
</html>
```
FILE: styles.css
```css
* { box-sizing: border-box; }
body { margin: 0; background: #fff; color: #000; font: 11px/14px "DejaVu Sans Condensed", "DejaVu Sans", sans-serif; }
h2, h3, p, ul, fieldset { margin: 0; padding: 0; }
button, input, select { font: inherit; color: inherit; margin: 0; border-radius: 0; }
button { padding: 0; border: 0; background: none; }
svg { width: 16px; height: 16px; flex: none; }
.sprite { position: absolute; width: 0; height: 0; }

/* step headings */
.step-title { padding: 4px 2px; font: bold 28px/34px Lato, "Open Sans", sans-serif; white-space: nowrap; }
.step--2 .step-title { padding-block: 22px; }
.step--3 .step-title { padding-block: 27px; }
.step--4 .step-title { padding-block: 25px; font-size: 26px; }
.step--4 { padding-bottom: 10px; }

/* windows */
.win { padding: 0 4px 4px; border: 1px solid #a2b1c5; border-radius: 5px; background: #ced9e7; }
.win--main { max-width: 1278px; margin-left: 2px; border-radius: 0 0 5px 5px; border-top-color: #ced9e7; border-right-color: #ced9e7; }
.win-title { display: flex; align-items: center; gap: 3px; height: 25px; padding: 0 1px 0 4px; }
.win--main .win-title { height: 23px; padding-bottom: 1px; }
.win-title h3 { flex: 1; color: #04468c; font: bold 11px/14px "DejaVu Sans Condensed", sans-serif; }
.tool { display: flex; align-items: center; justify-content: center; width: 15px; height: 15px; border: 1px solid #8eb3e3; border-radius: 3px; background: #fff; }
.tool svg { width: 12px; height: 12px; }
.frame { border: 1px solid #99bce8; background: #fff; }
.status { display: flex; justify-content: space-between; align-items: center; height: 26px; padding: 0 9px; border-bottom: 1px solid #4f90dc; color: #444; white-space: nowrap; }
.foot { display: flex; align-items: center; gap: 8px; padding: 4px 5px; }
.fill { flex: 1; }
.btn { display: inline-flex; align-items: center; gap: 4px; height: 22px; padding: 0 4px 0 3px; border: 1px solid #d1d1d1; border-radius: 3px; background: linear-gradient(#fff, #f9f9f9 48%, #e2e2e2 52%, #e7e7e7); color: #333; white-space: nowrap; }
.cut { width: 1px; height: 16px; background: #bbb; }
.sep { width: 2px; height: 14px; border-left: 1px solid #98c8ff; border-right: 1px solid #fff; }

/* form controls */
.rows { display: flex; flex-direction: column; gap: 5px; }
.row { display: flex; align-items: center; gap: 5px; font-size: 12px; }
.halves { display: grid; grid-template-columns: 1fr 1fr; gap: 5px; }
.lbl { flex: none; text-align: right; white-space: nowrap; }
.grow, .lbl.grow { flex: 1; min-width: 0; }
input, select { height: 22px; padding: 0 4px; border: 1px solid #b5b8c8; background: linear-gradient(#eef1f3, #fff 4px); font-size: 12px; min-width: 0; }
input:disabled { background: #f0f0f0; color: #666; opacity: 1; }
input.focus { border-color: #7eadd9; }
.combo { position: relative; display: flex; height: 22px; border: 1px solid #b5b8c8; background: linear-gradient(#eef1f3, #fff 4px); }
.combo.focus { border-color: #7eadd9; }
.combo input, .combo select { flex: 1; width: 0; height: 20px; padding: 0 3px; border: 0; background: none; appearance: none; outline: 0; }
.combo button { width: 17px; height: 20px; border-left: 1px solid #b5b8c8; background: linear-gradient(#f6f7f9 50%, #e4e6ea); }
.combo.focus button { background: linear-gradient(#e6f0fb 50%, #c9dcf3); }
.combo button svg { display: block; width: 16px; height: 20px; }
.combo button svg.dim { opacity: .6; }
.picked { align-self: center; margin-left: 3px; background: #3390ff; color: #fff; white-space: nowrap; line-height: 16px; }
.sq { flex: none; display: flex; align-items: center; justify-content: center; width: 22px; height: 22px; border: 1px solid #d1d1d1; border-radius: 3px; background: linear-gradient(#fff, #f4f4f4 48%, #e2e2e2 52%, #e7e7e7); }
.sq:disabled svg { opacity: .65; }
.row--head .sq:disabled { opacity: .6; }
.w43 { width: 43px; } .w65 { width: 65px; } .w75 { width: 75px; } .w85 { width: 85px; } .w90 { width: 90px; } .w92 { width: 92px; }
.w100 { width: 100px; } .w115 { width: 115px; } .w125 { width: 125px; } .w135 { width: 135px; } .w144 { width: 144px; } .w145 { width: 145px; }
.w150 { width: 150px; } .w152 { width: 152px; } .w154 { width: 154px; } .w156 { width: 156px; } .w212 { width: 212px; } .w228 { width: 228px; }

input[type="checkbox"] { appearance: none; display: block; position: relative; width: 13px; height: 13px; margin: 0 auto; padding: 0; border: 1px solid #8b8b8b; box-shadow: inset 0 0 0 1px #f4f4f4; background: linear-gradient(135deg, #c8ccd0, #fff); }
input[type="checkbox"]:checked::after { content: ""; position: absolute; left: 4px; top: 0; width: 4px; height: 9px; border: solid #3a5da5; border-width: 0 2px 2px 0; transform: rotate(35deg); }

/* tabs and toolbars */
.tabs { display: flex; gap: 3px; height: 28px; padding: 1px 3px 0; border-top: 1px solid #99bce8; border-bottom: 1px solid #99bce8; background: linear-gradient(#dde8f5, #cbdcef 22px, #99bce8 22px, #99bce8 23px, #dfeaf7 23px); }
.tab { display: flex; align-items: center; gap: 10px; height: 23px; padding: 0 8px; border: 1px solid #8db2e3; border-bottom: 0; border-radius: 4px 4px 0 0; background: linear-gradient(#f0f6fe, #cfe0f5); box-shadow: inset 0 0 0 1px #eaf2fc; color: #416da3; font-weight: bold; white-space: nowrap; }
.tab.on { height: 24px; background: linear-gradient(#fff, #e4edf9); color: #15498b; }
.tab svg { align-self: flex-start; width: 10px; height: 10px; margin: 4px -4px 0 0; border: 1px solid #a9c4e8; border-radius: 2px; }
.toolbar { display: flex; align-items: center; gap: 11px; height: 27px; padding: 0 2px 0 6px; border-bottom: 1px solid #99bce8; background: linear-gradient(#dfe9f5, #d3e1f1); }
.tb { display: flex; align-items: center; gap: 4px; color: #333; white-space: nowrap; }

/* step 1 */
.row--head { padding: 5px 5px 5px 0; }
.scroll-form { display: flex; height: 159px; overflow: hidden; }
.scroll-form .rows { flex: 1; padding: 5px 6px 0 0; }
.vbar { display: flex; flex-direction: column; align-items: center; justify-content: space-between; width: 17px; padding: 7px 0; background: #f1f1f1; }
.vbar span { width: 13px; height: 119px; margin-bottom: 8px; background: #c1c1c1; }
.splitter { height: 7px; border: solid #99bce8; border-width: 1px 0; background: #dfe8f6; }
.totals { display: flex; align-items: center; gap: 5px; margin-left: auto; font-size: 12px; white-space: nowrap; }
.totals input { width: 55px; margin-right: 11px; background: #e3e7ee; }
.totals input:last-child { margin-right: 0; }
.split { position: relative; display: flex; }
.locked { display: flex; flex-direction: column; justify-content: space-between; width: 121px; border-right: 1px solid #99bce8; }
.free { flex: 1; min-width: 0; overflow: hidden; }
.note { padding: 11px 2px 18px; font: bold 15px/19px Lato, "Open Sans", sans-serif; white-space: nowrap; }
.hbar { display: flex; align-items: center; justify-content: space-between; height: 17px; padding: 0 6px; background: #f0f0f0; }
.hbar span { flex: 1; height: 13px; margin: 0 135px 0 7px; background: #a8a8a8; }
.tri { display: inline-block; width: 0; height: 0; border: 4px solid transparent; vertical-align: middle; }
.tri.up { border-top: 0; border-bottom: 4px solid #6f8fc0; }
.tri.dn { border-bottom: 0; border-top: 4px solid #6f8fc0; }
.tri.lf { border-left: 0; border-right: 5px solid #a0a0a0; }
.tri.rt { border-right: 0; border-left: 5px solid #a0a0a0; }
.tri.rt.dark { border-left-color: #505050; }
.tri.dn.dark { border-top-color: #111; }
.vbar .up { border-bottom-color: #a0a0a0; }
.vbar .dn { border-top-color: #505050; }

/* data grids */
.grid { width: 100%; table-layout: fixed; border-spacing: 0; }
.grid--days { width: 1235px; }
.grid th { height: 23px; padding: 0 6px; border-right: 1px solid #c5c5c5; border-bottom: 1px solid #c5c5c5; background: linear-gradient(#f9f9f9, #e3e3e3); font-weight: normal; text-align: left; line-height: 22px; white-space: nowrap; overflow: hidden; }
.grid th.c { padding: 0; text-align: center; }
.grid th.sorted { background: linear-gradient(#ebf3fd 50%, #d9e8fb 50%); }
.grid tr.tall th { height: 47px; }
.grid--days tr + tr th { height: 24px; }
.grid td { height: 21px; padding: 0 6px; border-bottom: 1px solid #ededed; line-height: 20px; white-space: nowrap; overflow: hidden; }
.grid td:has(input) { padding: 0; }
.grid tr:nth-child(even) td { background: #fafafa; }
.grid tr.sel td { border-top: 1px dotted #a3bae9; border-bottom: 1px dotted #a3bae9; background: #dfe8f6; line-height: 19px; }
.grid tr.sel td.cur { border: 1px dotted #333; }
.grid td.ic { padding-left: 3px; }
.ic svg { display: block; }
.c35 { width: 35px; } .c40 { width: 40px; } .c50 { width: 50px; } .c51 { width: 51px; } .c53 { width: 53px; } .c54 { width: 54px; } .c55 { width: 55px; } .c59 { width: 59px; }
.c60 { width: 60px; } .c70 { width: 70px; } .c80 { width: 80px; } .c87 { width: 87px; } .c90 { width: 90px; } .c99 { width: 99px; } .c100 { width: 100px; } .c117 { width: 117px; }
.c119 { width: 119px; } .c120 { width: 120px; } .c140 { width: 140px; } .c150 { width: 150px; } .c169 { width: 169px; } .c180 { width: 180px; } .c202 { width: 202px; } .c217 { width: 217px; }

/* panels behind a dialog */
.stage { position: relative; }
.stage--2 { max-width: 1580px; }
.stage--4 { max-width: 1212px; }
.panel { border-left: 3px solid #99bce8; border-top: 1px solid #99bce8; }
.panel-title { padding: 0 7px; color: #15498b; background: linear-gradient(#e2ecf8, #cddef3 45%, #b3ccee 46%, #cbddf3); border-bottom: 1px solid #99bce8; font: bold 11px/27px "DejaVu Sans Condensed", sans-serif; }
.masked { position: relative; overflow: hidden; }
.masked::after { content: ""; position: absolute; inset: 0 0 0 -3px; background: rgba(204, 204, 204, .5); }
.masked .grid th { height: 24px; }
.grid--cut { margin-bottom: -8px; }
.stage--4 .toolbar { height: 28px; }

.dialog { position: absolute; box-shadow: 0 2px 6px rgba(0, 0, 0, .45); }
.dialog--2 { left: 276px; top: 281px; width: 798px; }
.dialog--3 { left: 56px; top: 21px; width: 797px; }
.dialog--4 { left: 347px; top: 280px; width: 669px; }
.body { padding: 10px 10px 14px 4px; border: 2px solid #99bce8; background: #fff; }
.dialog .foot { padding: 5px 5px 3px; gap: 9px; }
.dialog--3 .body { padding: 12px 10px 14px; }
.dialog--4 .status { padding: 0 12px 0 8px; border: 1px solid #99bce8; border-top: 0; background: #dfe8f6; height: 25px; }
.dialog--4 .foot { gap: 6px; padding: 5px 6px 3px; border: 1px solid #99bce8; border-top: 0; background: #dfe8f6; }

fieldset { display: block; min-width: 0; margin-bottom: 11px; padding: 2px 11px 5px 5px; border: 1px solid #b5b8c8; border-radius: 3px; }
legend { margin-left: 5px; padding: 0 3px; color: #15428b; line-height: 14px; }
fieldset .row + .row { margin-top: 5px; }
.heads { height: 18px; }
.row--access { margin-top: -1px; }

/* step 3 */
.linked { position: relative; }
.duo { display: grid; grid-template-columns: minmax(0, 899fr) minmax(0, 682fr); gap: 7px; margin-left: 4px; overflow: hidden; }
.tails { margin-top: -11px; list-style: none; }
.tails li { height: 21px; padding-left: 1px; border-bottom: 1px solid #ededed; line-height: 20px; }
.tails li:nth-child(even) { background: #fafafa; }
.tails li.sel { border-block: 1px dotted #a3bae9; background: #dfe8f6; line-height: 19px; }
.tails.masked::after { inset: 0; }
.explain { padding-top: 7px; font: bold 26px/35px Lato, "Open Sans", sans-serif; white-space: nowrap; }
.explain p + p { margin-top: 35px; }

.app { border-top: 2px solid #99bce8; }
.app .tabs { height: 26px; padding-top: 0; border-top: 0; }
.panel--live { border-top: 3px solid #99bce8; }
.panel--live .panel-title { font-size: 11px; line-height: 25px; }
.panel--live .toolbar { padding-left: 5px; }
.room { position: relative; }
.room--profiles { min-height: 353px; padding-bottom: 309px; }
.room--days { padding-bottom: 69px; }
.pager { display: flex; align-items: center; gap: 7px; height: 31px; padding: 0 5px; border-top: 1px solid #99bce8; border-bottom: 2px solid #99bce8; background: linear-gradient(#dfe9f5, #d3e1f1); color: #333; }
.pager svg { display: block; width: 12px; height: 12px; }
.pager button { width: 17px; }
.pager button svg { margin: auto; }
.pager input { width: 30px; color: #000; }
.pager b { margin-left: auto; color: #444; }
.app .tabs--low { height: 27px; }

/* hand-drawn highlights */
.mark { position: absolute; border: 3px solid #000; border-radius: 7px; }
.mark--sab { left: 2px; right: 0; top: 172px; height: 25px; border-radius: 0; }
.mark--add { left: 4px; top: 28px; width: 78px; height: 28px; }
.mark--seven { left: 0; top: 45px; width: 16px; height: 20px; border-radius: 3px; }
.mark--code { left: 110px; top: 44px; width: 64px; height: 22px; }
.ringed { outline: 3px solid #000; outline-offset: 2px; border-radius: 5px; }
.elbow { position: absolute; left: 9px; top: 196px; width: 62px; height: 66px; }
.arrow { position: absolute; }
.arrow--next { left: 565px; bottom: 5px; width: 48px; height: 26px; }
.arrow--row { left: 424px; top: 42px; width: 66px; height: 28px; }
.callout { position: absolute; left: 536px; top: 26px; font: bold 26px/35px Lato, "Open Sans", sans-serif; white-space: nowrap; }
.link-line { position: absolute; left: 0; top: 0; width: 960px; height: 760px; pointer-events: none; }
```
